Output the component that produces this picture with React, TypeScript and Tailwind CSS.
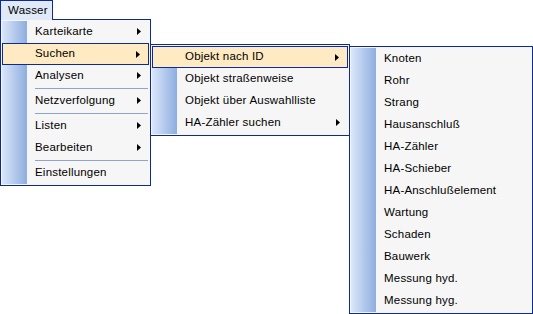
import React from 'react'

type Entry = { label?: string; sub?: boolean; active?: boolean; sep?: boolean }

const font = { fontFamily: "'Liberation Sans', Arial, sans-serif" }

const Arrow = () => (
  <svg width="5" height="7" viewBox="0 0 5 7" className="absolute right-[7px] top-[7px]">
    <path d="M0 0L4 3.5L0 7Z" fill="#000" />
  </svg>
)

// one drop-down panel of the cascade
const Menu = ({ items, className }: { items: Entry[]; className: string }) => (
  <div className={`absolute border border-[#0c2c94] bg-[#f6f6f6] p-[1px] ${className}`}>
    <div className="absolute left-[1px] top-[1px] bottom-[1px] w-[25px] bg-gradient-to-r from-[#dbe7f9] to-[#8eadde]" />
    <div className="relative flex flex-col">
      {items.map((it, i) =>
        it.sep ? (
          <div key={i} className="h-[3px] flex items-center pl-[33px] pr-[1px]">
            <div className="h-px w-full bg-[#8ea3d2]" />
          </div>
        ) : (
          <div
            key={i}
            className={`relative h-[22px] flex items-center text-[11.5px] tracking-[0.2px] text-black ${
              it.active ? 'bg-[#ffeac3] border border-[#0c2c94] pl-[32px]' : 'pl-[33px]'
            }`}
          >
            {it.label}
            {it.sub && <Arrow />}
          </div>
        )
      )}
    </div>
  </div>
)

const App = () => (
  <div className="relative w-[533px] h-[314px] bg-white overflow-hidden" style={font}>
    <div className="relative z-10 w-[53px] h-[20px] border-t border-l border-r border-[#0c2c94] bg-[#dfe9f7] flex items-center pl-[7px] text-[11.5px] tracking-[0.2px] text-black">
      Wasser
    </div>
    <Menu
      className="left-0 top-[19px] w-[151px]"
      items={[
        { label: 'Karteikarte', sub: true },
        { label: 'Suchen', sub: true, active: true },
        { label: 'Analysen', sub: true },
        { sep: true },
        { label: 'Netzverfolgung', sub: true },
        { sep: true },
        { label: 'Listen', sub: true },
        { label: 'Bearbeiten', sub: true },
        { sep: true },
        { label: 'Einstellungen' },
      ]}
    />
    <Menu
      className="left-[150px] top-[44px] w-[200px] z-10"
      items={[
        { label: 'Objekt nach ID', sub: true, active: true },
        { label: 'Objekt straßenweise' },
        { label: 'Objekt über Auswahlliste' },
        { label: 'HA-Zähler suchen', sub: true },
      ]}
    />
    <Menu
      className="left-[349px] top-[46px] w-[184px] z-20"
      items={[
        { label: 'Knoten' },
        { label: 'Rohr' },
        { label: 'Strang' },
        { label: 'Hausanschluß' },
        { label: 'HA-Zähler' },
        { label: 'HA-Schieber' },
        { label: 'HA-Anschlußelement' },
        { label: 'Wartung' },
        { label: 'Schaden' },
        { label: 'Bauwerk' },
        { label: 'Messung hyd.' },
        { label: 'Messung hyg.' },
      ]}
    />
  </div>
)

export default App
